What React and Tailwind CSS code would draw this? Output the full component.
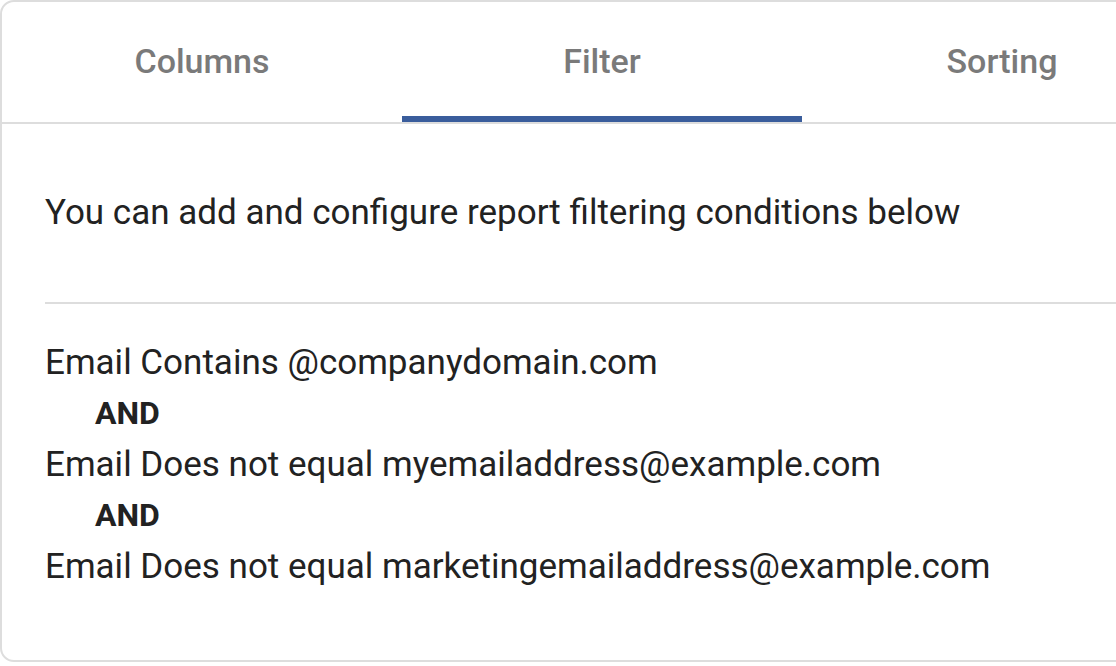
export default function App() {
  const tabs = ["Columns", "Filter", "Sorting"];
  return (
    <div className="w-[1116px] h-[666px] overflow-hidden bg-white" style={{ fontFamily: "Roboto, 'Noto Sans', sans-serif" }}>
      <div className="w-[1260px] h-[662px] border-2 border-[#dddddd] rounded-[14px] bg-white flex flex-col">
        <div className="flex border-b-2 border-[#dddddd]">
          {tabs.map((t, i) => (
            <div
              key={t}
              className={
                "w-[400px] h-[120px] flex items-center justify-center text-[34px] font-medium text-[#7a7a7a] border-b-[6px] " +
                (i === 1 ? "border-[#3a5d9c]" : "border-transparent")
              }
            >
              <span className="mt-[4px]">{t}</span>
            </div>
          ))}
        </div>
        <div className="pl-[43px] pt-[63px] text-[35px] leading-[51px] text-[#222222]">
          <p>You can add and configure report filtering conditions below</p>
          <div className="mt-[64px] h-[2px] bg-[#dddddd]" />
          <div className="mt-[33px]">
            <p>Email Contains @companydomain.com</p>
            <p className="pl-[50px] font-bold text-[32px]">AND</p>
            <p>Email Does not equal myemailaddress@example.com</p>
            <p className="pl-[50px] font-bold text-[32px]">AND</p>
            <p>Email Does not equal marketingemailaddress@example.com</p>
          </div>
        </div>
      </div>
    </div>
  );
}
